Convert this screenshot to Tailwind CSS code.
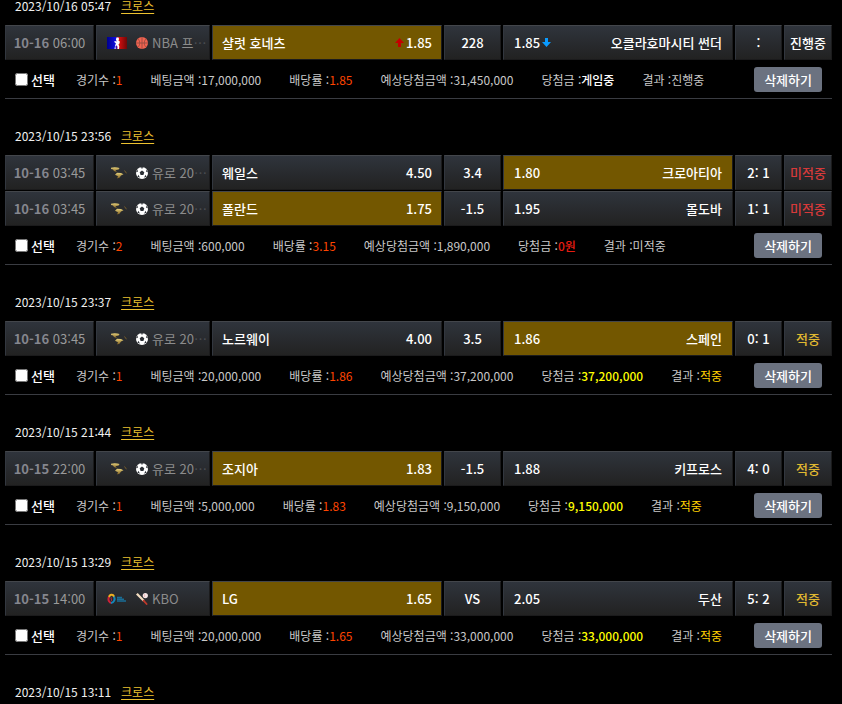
<!DOCTYPE html>
<html lang="ko">
<head>
    <meta charset="UTF-8">
    <meta name="viewport" content="width=device-width, initial-scale=1.0">
    <title>베팅내역</title>
    <script src="https://cdn.jsdelivr.net/npm/@tailwindcss/browser@4"></script>
</head>
<body class="bg-black text-white font-['Noto_Sans_CJK_KR',sans-serif]">
    <svg class="absolute w-0 h-0" aria-hidden="true">
        <defs>
            <linearGradient id="nbaBg"><stop offset="0" stop-color="#00008c"/><stop offset=".45" stop-color="#1010e0"/><stop offset=".55" stop-color="#e01010"/><stop offset="1" stop-color="#6e0808"/></linearGradient>
            <linearGradient id="gold" x2="0" y2="1"><stop offset="0" stop-color="#e8d27a"/><stop offset="1" stop-color="#7a5a1e"/></linearGradient>
        </defs>
    </svg>

    <main id="betList" class="-mt-1 ml-[5px] mr-[10px] flex flex-col gap-[27px]"></main>

    <script>
        const icons = {
            nba: `<svg class="w-5 h-3 shrink-0" viewBox="0 0 20 12"><rect width="20" height="12" fill="url(#nbaBg)"/><path d="M9.5 0.5h2l.6 1.8-.8 1 1.6 1.4-.6 2-.8.5.8 2.3-.3 2.5h-1.6l.2-2.2-1.4-1.6-.8 1.2.3 2.6H7.5l.6-3.6.8-2.2L7.2 5l.6-1 2 .6-.9-2z" fill="#fff"/></svg>`,
            euro: `<svg class="w-5 h-3 shrink-0" viewBox="0 0 20 12"><path d="M4 .8c3-1 6-.6 8.500.3l-.8 1.300-3.200.8 1.500 2-3-1.200-1-1.600-2-.4z" fill="url(#gold)"/><path d="M10 5.800l4 .3 2.500 1.200-2.500 1.200-1.500 2.300-2.500.8 1-2.300-3-1.500z" fill="url(#gold)"/><path d="M17.500 3.500l2 2.800" stroke="#8a6a2a" stroke-width=".8"/></svg>`,
            kbo: `<svg class="w-5 h-3 shrink-0" viewBox="0 0 20 12"><g fill="none" stroke-width="2"><path d="M2 4.500C2.500 1 6.500 1 7 4" stroke="#f0b020"/><path d="M2 4c-1.500 3 .5 6 2.500 6" stroke="#d02038"/><path d="M7 3.500c1.500 3 0 6-3 6.500" stroke="#1486b8"/><path d="M4.500 4.500c-1.200 1 .8 2 0 3.300" stroke="#d02038" stroke-width="1"/></g><path d="M10 4.500h5M10 6.200h7M10 8h9" stroke="#1a6e96" stroke-width="1.400"/></svg>`,
            basketball: `<svg class="w-3 h-3" viewBox="0 0 12 12"><circle cx="6" cy="6" r="6" fill="#f26350"/><path d="M6 0v12M0 6h12M2 1.800c2.300 2.500 2.300 6 0 8.400M10 1.800c-2.300 2.500-2.300 6 0 8.400" fill="none" stroke="#8e4a40" stroke-width=".8"/></svg>`,
            soccer: `<svg class="w-3 h-3" viewBox="0 0 12 12"><circle cx="6" cy="6" r="6" fill="#fff"/><path d="M6 3.600l2.300 1.700-.9 2.700H4.600l-.9-2.700zM4.300.3h3.400L6 1.700zM0 5.200l1.500-2.700.4 2.300zM12 5.200l-1.500-2.700-.4 2.300zM1.600 10l.6-2.200 1.800 2.600zM10.400 10l-.6-2.200L8 10.400z" fill="#2b2f35"/></svg>`,
            baseball: `<svg class="w-3 h-3" viewBox="0 0 12 12"><path d="M0 1.500L1.700 0l6.800 7-1.500 1.500z" fill="#f2dcc0"/><path d="M7.600 7.600L10.600 11" stroke="#c0392b" stroke-width="1.800" stroke-linecap="round"/><circle cx="9.300" cy="2.600" r="2.600" fill="#f5e6e6"/><path d="M8 1.200c1 .8 1 2 0 2.800" fill="none" stroke="#e08080" stroke-width=".5"/></svg>`,
            up: `<svg class="w-[9px] h-[9px]" viewBox="0 0 9 9"><path d="M4.500 0L9 5H6v4H3V5H0z" fill="#c40000"/></svg>`,
            down: `<svg class="w-[9px] h-[9px]" viewBox="0 0 9 9"><path d="M4.500 9L0 4h3V0h3v4h3z" fill="#0a9bff"/></svg>`
        };

        const statusColor = { '진행중': 'text-white', '미적중': 'text-[#d63a3a]', '적중': 'text-[#e0b830]' };
        const resultColor = { '진행중': 'text-[#c8c8c8]', '미적중': 'text-[#c8c8c8]', '적중': 'text-[#ffd200]' };

        const bets = [
            { date: '2023/10/16 05:47', amount: '17,000,000', odds: '1.85', expected: '31,450,000', prize: '게임중', prizeColor: 'text-white', result: '진행중',
              games: [{ day: '10-16', time: '06:00', logo: 'nba', ball: 'basketball', league: 'NBA 프', cut: true, home: '샬럿 호네츠', homeOdds: '1.85', arrows: true, mid: '228', awayOdds: '1.85', away: '오클라호마시티 썬더', score: ':', pick: 'home' }] },
            { date: '2023/10/15 23:56', amount: '600,000', odds: '3.15', expected: '1,890,000', prize: '0원', prizeColor: 'text-[#e81c10]', result: '미적중',
              games: [
                { day: '10-16', time: '03:45', logo: 'euro', ball: 'soccer', league: '유로 20', cut: true, home: '웨일스', homeOdds: '4.50', mid: '3.4', awayOdds: '1.80', away: '크로아티아', score: '2: 1', pick: 'away' },
                { day: '10-16', time: '03:45', logo: 'euro', ball: 'soccer', league: '유로 20', cut: true, home: '폴란드', homeOdds: '1.75', mid: '-1.5', awayOdds: '1.95', away: '몰도바', score: '1: 1', pick: 'home' }] },
            { date: '2023/10/15 23:37', amount: '20,000,000', odds: '1.86', expected: '37,200,000', prize: '37,200,000', prizeColor: 'text-[#ffff00]', result: '적중',
              games: [{ day: '10-16', time: '03:45', logo: 'euro', ball: 'soccer', league: '유로 20', cut: true, home: '노르웨이', homeOdds: '4.00', mid: '3.5', awayOdds: '1.86', away: '스페인', score: '0: 1', pick: 'away' }] },
            { date: '2023/10/15 21:44', amount: '5,000,000', odds: '1.83', expected: '9,150,000', prize: '9,150,000', prizeColor: 'text-[#ffff00]', result: '적중',
              games: [{ day: '10-15', time: '22:00', logo: 'euro', ball: 'soccer', league: '유로 20', cut: true, home: '조지아', homeOdds: '1.83', mid: '-1.5', awayOdds: '1.88', away: '키프로스', score: '4: 0', pick: 'home' }] },
            { date: '2023/10/15 13:29', amount: '20,000,000', odds: '1.65', expected: '33,000,000', prize: '33,000,000', prizeColor: 'text-[#ffff00]', result: '적중',
              games: [{ day: '10-15', time: '14:00', logo: 'kbo', ball: 'baseball', league: 'KBO', home: 'LG', homeOdds: '1.65', mid: 'VS', awayOdds: '2.05', away: '두산', score: '5: 2', pick: 'home' }] },
            { date: '2023/10/15 13:11', games: [] }
        ];

        const cell = 'h-[35px] p-0 border border-t-[#43464b] border-l-[#32373f] border-r-[#1b1b1c] border-b-[#1b1b1c] bg-linear-to-b from-[#2f343c] to-[#222222]';
        const picked = 'h-[35px] p-0 border border-t-[#43464b] border-l-[#32373f] border-r-[#1b1b1c] border-b-[#1b1b1c] bg-[#735700]';

        function gameRow(game, result) {
            return `
                <tr>
                    <td class="${cell} text-center font-normal text-[#9a9a9a] whitespace-nowrap"><b class="text-[#85868e]">${game.day}</b> ${game.time}</td>
                    <td class="${cell}">
                        <div class="flex items-center pl-[10px] font-normal text-[#8c8c8c] whitespace-nowrap">
                            ${icons[game.logo]}
                            <span class="ml-[9px] mr-1 shrink-0">${icons[game.ball]}</span>
                            <span>${game.league}${game.cut ? '<span class="text-[#4a4d52]">…</span>' : ''}</span>
                        </div>
                    </td>
                    <td class="${game.pick === 'home' ? picked : cell}">
                        <div class="flex items-center justify-between px-[9px]">
                            <span>${game.home}</span>
                            <span class="flex items-center gap-0.5">${game.arrows ? icons.up : ''}${game.homeOdds}</span>
                        </div>
                    </td>
                    <td class="${cell} text-center">${game.mid}</td>
                    <td class="${game.pick === 'away' ? picked : cell}">
                        <div class="flex items-center justify-between px-[10px]">
                            <span class="flex items-center gap-0.5">${game.awayOdds}${game.arrows ? icons.down : ''}</span>
                            <span>${game.away}</span>
                        </div>
                    </td>
                    <td class="${cell} text-center">${game.score}</td>
                    <td class="${cell} text-center whitespace-nowrap ${statusColor[result]}">${result}</td>
                </tr>`;
        }

        function betFooter(bet, index) {
            return `
                <div class="h-[38px] flex items-center border-b border-[#3a3c42] text-xs text-[#c8c8c8] whitespace-nowrap">
                    <input id="bet${index}" type="checkbox" class="ml-[10px] w-[13px] h-[13px]">
                    <label for="bet${index}" class="ml-[3px] mr-[21px] text-[13px] font-medium text-white">선택</label>
                    <div class="flex gap-7">
                        <span>경기수 :<span class="text-[#ff4500]">${bet.games.length}</span></span>
                        <span>베팅금액 :${bet.amount}</span>
                        <span>배당률 :<span class="text-[#ff4500]">${bet.odds}</span></span>
                        <span>예상당첨금액 :${bet.expected}</span>
                        <span>당첨금 :<span class="font-medium ${bet.prizeColor}">${bet.prize}</span></span>
                        <span>결과 :<span class="${resultColor[bet.result]}">${bet.result}</span></span>
                    </div>
                    <button type="button" onclick="deleteBet(${index})" class="ml-auto mr-[10px] h-[25px] px-[10px] rounded-[3px] bg-[#6b7280] text-[13px] font-medium text-white">삭제하기</button>
                </div>`;
        }

        function deleteBet(index) {
            bets.splice(index, 1);
            renderBets();
        }

        function renderBets() {
            document.getElementById('betList').innerHTML = bets.map((bet, index) => `
                <section>
                    <div class="flex items-center gap-[10px] h-5 pl-[10px] text-xs">
                        <span class="text-[#f0f0f0]">${bet.date}</span>
                        <a href="#" class="text-[#ecc12f] underline underline-offset-2">크로스</a>
                    </div>
                    ${bet.games.length ? `
                    <table class="mt-2 -ml-0.5 w-[calc(100%+4px)] table-fixed border-separate border-spacing-x-0.5 border-spacing-y-px text-[13px] font-medium">
                        <colgroup>
                            <col class="w-[89px]"><col class="w-[114px]"><col><col class="w-[57px]"><col><col class="w-[47px]"><col class="w-[48px]">
                        </colgroup>
                        <tbody>${bet.games.map(game => gameRow(game, bet.result)).join('')}</tbody>
                    </table>
                    ${betFooter(bet, index)}` : ''}
                </section>`).join('');
        }

        renderBets();
    </script>
</body>
</html>
